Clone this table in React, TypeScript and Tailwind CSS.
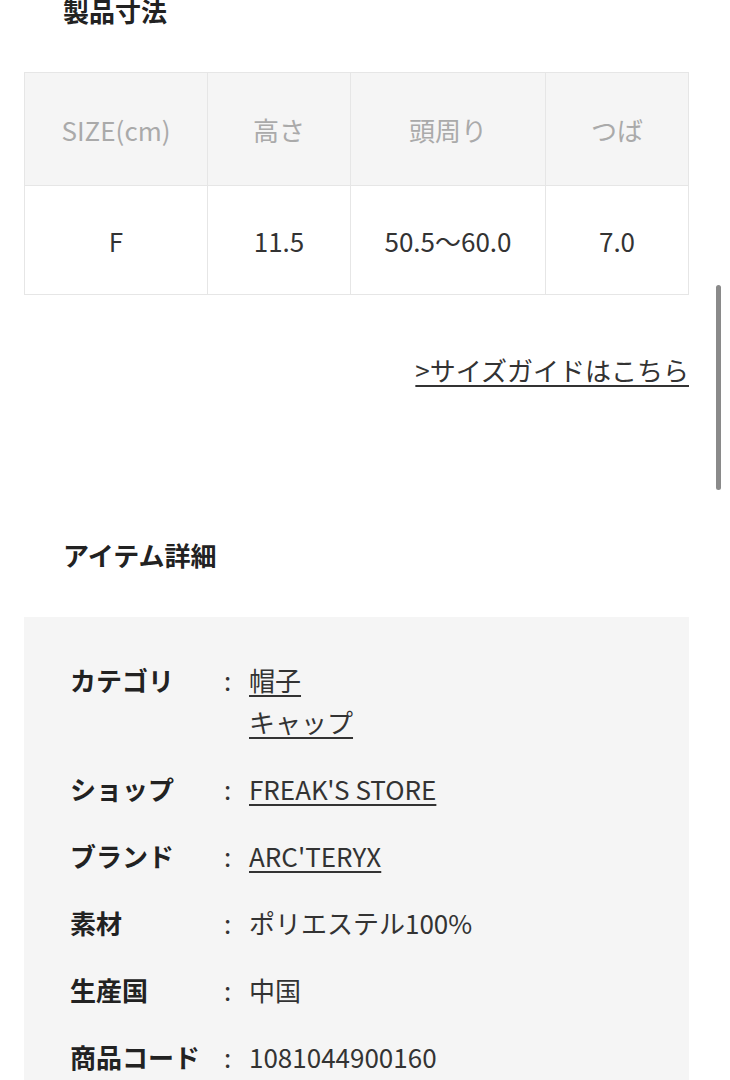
const font = { fontFamily: '"Noto Sans CJK JP", "Noto Sans", sans-serif' };

const headers = ['SIZE(cm)', '高さ', '頭周り', 'つば'];
const values = ['F', '11.5', '50.5〜60.0', '7.0'];
const colWidths = ['w-[183px]', 'w-[143px]', 'w-[195px]', 'flex-1'];

interface DetailRow {
  label: string;
  values: string[];
  link?: boolean;
}

const details: DetailRow[] = [
  { label: 'カテゴリ', values: ['帽子', 'キャップ'], link: true },
  { label: 'ショップ', values: ["FREAK'S STORE"], link: true },
  { label: 'ブランド', values: ["ARC'TERYX"], link: true },
  { label: '素材', values: ['ポリエステル100%'] },
  { label: '生産国', values: ['中国'] },
  { label: '商品コード', values: ['1081044900160'] },
];

export default function App() {
  return (
    <div className="relative h-[1080px] w-[730px] overflow-hidden bg-white text-[#222]" style={font}>
      <h2 className="ml-[63px] mt-[-7px] text-[26px] font-bold leading-[36px]">製品寸法</h2>

      <div className="ml-[24px] mr-[41px] mt-[43px] border border-[#e6e6e6]">
        <div className="flex h-[112px] bg-[#f5f5f5]">
          {headers.map((h, i) => (
            <div
              key={h}
              className={`${colWidths[i]} flex items-center justify-center text-[26px] text-[#aaa] ${i < 3 ? 'border-r border-[#e6e6e6]' : ''}`}
            >
              {h}
            </div>
          ))}
        </div>
        <div className="flex h-[109px] border-t border-[#e6e6e6]">
          {values.map((v, i) => (
            <div
              key={i}
              className={`${colWidths[i]} flex items-center justify-center text-[26px] text-[#333] ${i < 3 ? 'border-r border-[#e6e6e6]' : ''}`}
            >
              {v}
            </div>
          ))}
        </div>
      </div>

      <div className="mr-[41px] mt-[57px] flex justify-end">
        <a className="text-[26px] leading-[36px] text-[#333] underline decoration-[2px] underline-offset-[4px]">
          &gt;サイズガイドはこちら
        </a>
      </div>

      <h2 className="ml-[63px] mt-[149px] text-[26px] font-bold leading-[36px]">アイテム詳細</h2>

      <div className="ml-[24px] mr-[41px] mt-[44px] bg-[#f5f5f5] px-[46px] pt-[45px] pb-[40px]">
        <div className="flex flex-col gap-[31px]">
          {details.map((d) => (
            <div key={d.label} className="flex text-[26px] leading-[36px]">
              <div className="w-[154px] font-bold text-[#222]">{d.label}</div>
              <div className="w-[25px] text-[#333]">:</div>
              <div className="flex flex-col gap-[6px]">
                {d.values.map((v) => (
                  <span
                    key={v}
                    className={`text-[#333] ${d.link ? 'underline decoration-[1.5px] underline-offset-[4px]' : ''}`}
                  >
                    {v}
                  </span>
                ))}
              </div>
            </div>
          ))}
        </div>
      </div>

      <div className="absolute left-[716px] top-[285px] h-[205px] w-[5px] rounded-full bg-[#8a8a8a]" />
    </div>
  );
}
